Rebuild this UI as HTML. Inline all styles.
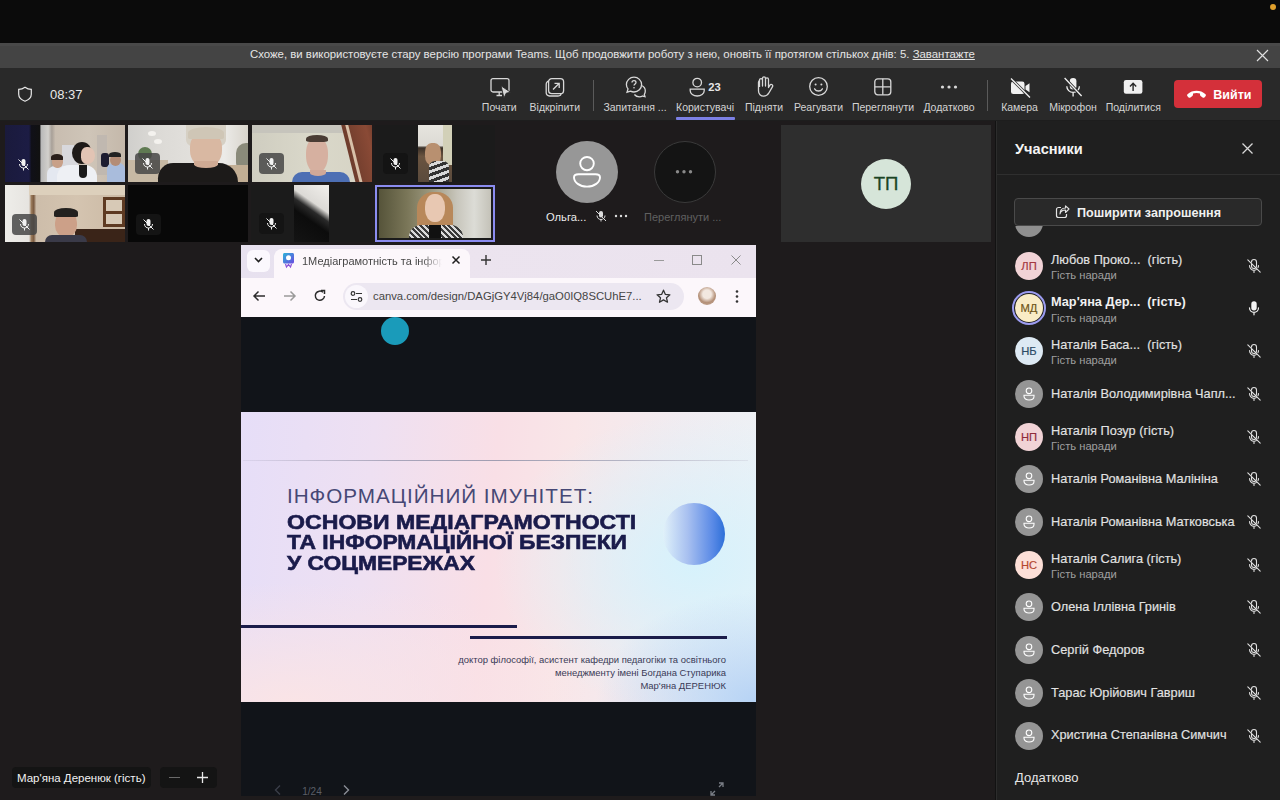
<!DOCTYPE html>
<html><head><meta charset="utf-8">
<style>
*{margin:0;padding:0;box-sizing:border-box}
html,body{width:1280px;height:800px;overflow:hidden;background:#1e1b1c;font-family:"Liberation Sans",sans-serif;color:#fff}
.a{position:absolute}
.t{position:absolute;white-space:nowrap;line-height:1}
svg{overflow:visible}
</style></head><body>

<div class="a" style="left:0px;top:0px;width:1280px;height:43px;background:#0b0b0b;"></div>
<div class="a" style="left:1269.5px;top:4px;width:6px;height:6px;border-radius:50%;background:#e0a02c"></div>
<div class="a" style="left:0px;top:43px;width:1280px;height:25px;background:#444444;"></div>
<div class="a" style="left:0px;top:43px;width:1280px;height:3px;background:#494949;"></div>
<div class="t" style="left:250.00px;top:48.85px;font-size:11.4px;color:#e6e6e6;font-weight:400;">Схоже, ви використовуєте стару версію програми Teams. Щоб продовжити роботу з нею, оновіть її протягом стількох днів: 5. <span style="text-decoration:underline;text-underline-offset:1px">Завантажте</span></div>
<svg class="a" style="left:1256px;top:49px;" width="13" height="13" viewBox="0 0 13 13"><path d="M1 1L12 12M12 1L1 12" stroke="#e0e0e0" stroke-width="1.15"/></svg>
<div class="a" style="left:0px;top:68px;width:1280px;height:52px;background:#292929;"></div>
<div class="a" style="left:0px;top:120px;width:1280px;height:1px;background:#1d1d1d;"></div>
<svg class="a" style="left:17px;top:86px;" width="16" height="16" viewBox="0 0 16 16"><path d="M8 1.2C10 2.6 12 3.3 14.3 3.4V8.2C14.3 11.6 11.9 13.7 8 15.2C4.1 13.7 1.7 11.6 1.7 8.2V3.4C4 3.3 6 2.6 8 1.2Z" fill="none" stroke="#e8e8e8" stroke-width="1.2"/></svg>
<div class="t" style="left:50.00px;top:87.60px;font-size:13px;color:#e8e8e8;font-weight:400;">08:37</div>
<svg class="a" style="left:489px;top:77px;" width="22" height="22" viewBox="0 0 22 22"><rect x="2" y="1.6" width="18" height="13.4" rx="2" fill="none" stroke="#d8d8d8" stroke-width="1.3"/><path d="M7.5 18.5H13M10.2 15V18.5" stroke="#d8d8d8" stroke-width="1.3"/><path d="M12 8.8L21.5 15.2L17.2 16.2L15 21Z" fill="#d8d8d8" stroke="#292929" stroke-width="0.9"/></svg>
<div class="t" style="left:199.30px;width:600px;text-align:center;top:101.51px;font-size:10.5px;color:#d4d4d4;font-weight:400;">Почати</div>
<svg class="a" style="left:544px;top:77px;" width="22" height="22" viewBox="0 0 22 22"><rect x="2.2" y="4" width="15" height="15" rx="3.2" fill="none" stroke="#d8d8d8" stroke-width="1.3"/><rect x="4.6" y="1.6" width="15" height="15" rx="3.2" fill="#292929" stroke="#d8d8d8" stroke-width="1.3"/><path d="M9 12.5L15 6.5M10.5 6.3H15.2V11" fill="none" stroke="#d8d8d8" stroke-width="1.3"/></svg>
<div class="t" style="left:254.80px;width:600px;text-align:center;top:101.51px;font-size:10.5px;color:#d4d4d4;font-weight:400;">Відкріпити</div>
<div class="a" style="left:593px;top:80px;width:1px;height:31px;background:#5a5a5a;"></div>
<svg class="a" style="left:624px;top:75px;" width="24" height="24" viewBox="0 0 24 24"><path d="M17.5 10.5C20 11.5 21.3 13.5 21.3 16C21.3 17.3 20.9 18.5 20.3 19.4L21 21.6L18.6 21C17.7 21.5 16.6 21.8 15.4 21.8C13.3 21.8 11.5 20.9 10.4 19.5" fill="none" stroke="#d8d8d8" stroke-width="1.3"/><path d="M10 2.2C14.2 2.2 17.6 5.5 17.6 9.6C17.6 13.7 14.2 17 10 17C8.7 17 7.5 16.7 6.5 16.2L3 17.2L4 13.9C3 12.7 2.4 11.2 2.4 9.6C2.4 5.5 5.8 2.2 10 2.2Z" fill="#292929" stroke="#d8d8d8" stroke-width="1.3"/><path d="M8 7.6C8 6.4 8.9 5.6 10 5.6C11.1 5.6 12 6.4 12 7.4C12 8.8 10 9 10 10.6" fill="none" stroke="#d8d8d8" stroke-width="1.3"/><circle cx="10" cy="12.8" r="0.8" fill="#d8d8d8"/></svg>
<div class="t" style="left:335.00px;width:600px;text-align:center;top:101.51px;font-size:10.5px;color:#d4d4d4;font-weight:400;">Запитання ...</div>
<svg class="a" style="left:688px;top:76px;" width="20" height="22" viewBox="0 0 20 22"><circle cx="9.2" cy="6.6" r="4.3" fill="none" stroke="#d8d8d8" stroke-width="1.3"/><path d="M2.2 13.2H16.2V14.8C16.2 17.8 13 20 9.2 20C5.4 20 2.2 17.8 2.2 14.8Z" fill="none" stroke="#d8d8d8" stroke-width="1.3"/></svg>
<div class="t" style="left:708.20px;top:81.92px;font-size:11.2px;color:#e6e6e6;font-weight:700;">23</div>
<div class="t" style="left:405.00px;width:600px;text-align:center;top:101.51px;font-size:10.5px;color:#d4d4d4;font-weight:400;">Користувачі</div>
<div class="a" style="left:676px;top:117px;width:59px;height:2.5px;background:#7c80e4;border-radius:1px"></div>
<svg class="a" style="left:753px;top:75px;" width="22" height="24" viewBox="0 0 22 24"><path d="M6.5 12V5.2C6.5 4.2 7.2 3.6 8 3.6C8.8 3.6 9.5 4.2 9.5 5.2V11V3.4C9.5 2.4 10.2 1.8 11 1.8C11.8 1.8 12.5 2.4 12.5 3.4V11V4.4C12.5 3.4 13.2 2.8 14 2.8C14.8 2.8 15.5 3.4 15.5 4.4V12.5L16.8 10.4C17.4 9.4 18.4 9.2 19.1 9.7C19.8 10.2 19.9 11 19.4 11.9L16 17.8C14.8 19.9 13 21.2 10.6 21.2C7.8 21.2 5.5 19 5.5 16V7.2C5.5 6.2 6.2 5.6 7 5.6" fill="none" stroke="#d8d8d8" stroke-width="1.3" stroke-linejoin="round"/></svg>
<div class="t" style="left:464.00px;width:600px;text-align:center;top:101.51px;font-size:10.5px;color:#d4d4d4;font-weight:400;">Підняти</div>
<svg class="a" style="left:808px;top:76px;" width="22" height="22" viewBox="0 0 22 22"><circle cx="10.5" cy="10.5" r="8.8" fill="none" stroke="#d8d8d8" stroke-width="1.3"/><circle cx="7.6" cy="8.4" r="1" fill="#d8d8d8"/><circle cx="13.4" cy="8.4" r="1" fill="#d8d8d8"/><path d="M6.6 12.8C7.5 14.3 8.9 15 10.5 15C12.1 15 13.5 14.3 14.4 12.8" fill="none" stroke="#d8d8d8" stroke-width="1.3" stroke-linecap="round"/></svg>
<div class="t" style="left:518.50px;width:600px;text-align:center;top:101.51px;font-size:10.5px;color:#d4d4d4;font-weight:400;">Реагувати</div>
<svg class="a" style="left:873px;top:77px;" width="20" height="20" viewBox="0 0 20 20"><rect x="1.8" y="1.8" width="16" height="16" rx="3" fill="none" stroke="#d8d8d8" stroke-width="1.3"/><path d="M9.8 1.8V17.8M1.8 9.8H17.8" stroke="#d8d8d8" stroke-width="1.3"/></svg>
<div class="t" style="left:583.00px;width:600px;text-align:center;top:101.51px;font-size:10.5px;color:#d4d4d4;font-weight:400;">Переглянути</div>
<svg class="a" style="left:939px;top:84px;" width="20" height="6" viewBox="0 0 20 6"><circle cx="3.5" cy="3" r="1.6" fill="#d8d8d8"/><circle cx="10" cy="3" r="1.6" fill="#d8d8d8"/><circle cx="16.5" cy="3" r="1.6" fill="#d8d8d8"/></svg>
<div class="t" style="left:649.00px;width:600px;text-align:center;top:101.51px;font-size:10.5px;color:#d4d4d4;font-weight:400;">Додатково</div>
<div class="a" style="left:987px;top:80px;width:1px;height:31px;background:#5a5a5a;"></div>
<svg class="a" style="left:1009px;top:77px;" width="24" height="22" viewBox="0 0 24 22"><rect x="2" y="4.5" width="13.5" height="12.5" rx="2.3" fill="#f0f0f0"/><path d="M16.5 9L20.5 6.3V15.2L16.5 12.5Z" fill="#f0f0f0"/><path d="M2 1.5L21 20.5" stroke="#292929" stroke-width="3"/><path d="M2 1.5L21 20.5" stroke="#f0f0f0" stroke-width="1.3"/></svg>
<div class="t" style="left:719.50px;width:600px;text-align:center;top:101.51px;font-size:10.5px;color:#d4d4d4;font-weight:400;">Камера</div>
<svg class="a" style="left:1063px;top:76px;" width="20" height="22" viewBox="0 0 20 22"><rect x="6.8" y="2" width="6.6" height="11.6" rx="3.3" fill="#f0f0f0"/><path d="M3.8 10.2C3.8 13.8 6.6 16.3 10.1 16.3C13.6 16.3 16.4 13.8 16.4 10.2M10.1 16.3V20.5" fill="none" stroke="#f0f0f0" stroke-width="1.3"/><path d="M1.6 2L18.6 20" stroke="#292929" stroke-width="3"/><path d="M1.6 2L18.6 20" stroke="#f0f0f0" stroke-width="1.3"/></svg>
<div class="t" style="left:773.00px;width:600px;text-align:center;top:101.51px;font-size:10.5px;color:#d4d4d4;font-weight:400;">Мікрофон</div>
<svg class="a" style="left:1122px;top:78px;" width="22" height="18" viewBox="0 0 22 18"><rect x="1.8" y="2" width="18.6" height="13.8" rx="2.2" fill="#f0f0f0"/><path d="M11.1 13V5.4M8 8.4L11.1 5.2L14.2 8.4" fill="none" stroke="#292929" stroke-width="1.4"/></svg>
<div class="t" style="left:833.30px;width:600px;text-align:center;top:101.51px;font-size:10.5px;color:#d4d4d4;font-weight:400;">Поділитися</div>
<div class="a" style="left:1174px;top:80px;width:88px;height:28px;background:#d4303a;border-radius:4px"></div>
<svg class="a" style="left:1186px;top:88px;" width="22" height="12" viewBox="0 0 22 12"><path d="M1.5 6.2C6.5 1.6 14.5 1.6 19.5 6.2C20.1 6.8 20 7.7 19.5 8.3L18.4 9.4C17.9 9.9 17.1 9.9 16.6 9.5L14.6 8C14.1 7.6 14 7 14 6.5V5.6C11.8 4.7 9.2 4.7 7 5.6V6.5C7 7 6.9 7.6 6.4 8L4.4 9.5C3.9 9.9 3.1 9.9 2.6 9.4L1.5 8.3C1 7.7 0.9 6.8 1.5 6.2Z" fill="#fff"/></svg>
<div class="t" style="left:1213.30px;top:89.32px;font-size:12.5px;color:#fff;font-weight:700;">Вийти</div>
<div class="a" style="left:5px;top:125px;width:120px;height:57px;background:#1b1b1b;overflow:hidden"><div class="a" style="left:0px;top:0px;width:120px;height:57px;background:linear-gradient(90deg,#1a1a3c 0%,#1c1c44 20%,#101018 22%,#111 29%,#b8b8b8 30%,#d2d0cc 36%,#a8a098 39%,#c8bdb0 42%,#cfc5b8 70%,#c4b8aa 100%);"></div><div class="a" style="left:57px;top:20px;width:16px;height:37px;background:#d8d8dc;"></div><div class="a" style="left:92px;top:10px;width:10px;height:40px;background:#c0b8b0;"></div><div class="a" style="left:42px;top:41px;width:30px;height:16px;background:#e4e8f0;border-radius:8px 8px 0 0"></div><div class="a" style="left:47px;top:30px;width:11px;height:13px;background:#c8a088;border-radius:45%"></div><div class="a" style="left:46px;top:29px;width:12px;height:6px;background:#2a1f1a;border-radius:50% 50% 10% 10%"></div><div class="a" style="left:52px;top:40px;width:40px;height:17px;background:#eef0f4;border-radius:12px 12px 0 0"></div><div class="a" style="left:67px;top:17px;width:20px;height:22px;background:#1e1a18;border-radius:50%"></div><div class="a" style="left:76px;top:22px;width:14px;height:17px;background:#e2c4b4;border-radius:40% 50% 50% 40%"></div><div class="a" style="left:74px;top:40px;width:8px;height:13px;background:#1a1a1a;border-radius:0 0 4px 4px"></div><div class="a" style="left:96px;top:28px;width:8px;height:14px;background:#1c1c30;border-radius:3px"></div><div class="a" style="left:102px;top:38px;width:18px;height:19px;background:#a9bcdc;border-radius:6px 6px 0 0"></div><div class="a" style="left:105px;top:29px;width:11px;height:12px;background:#b48c76;border-radius:50%"></div><div class="a" style="left:104px;top:27px;width:12px;height:5px;background:#222;border-radius:50% 50% 0 0"></div></div>
<div class="a" style="left:11px;top:154px;width:25px;height:21px;border-radius:4px;background:transparent"></div>
<svg class="a" style="left:17px;top:158px;" width="13" height="13" viewBox="0 0 13 13"><rect x="4.5" y="1" width="4" height="7" rx="2" fill="#f2f2f2"/><path d="M2.5 6C2.5 8.5 4.3 10 6.5 10C8.7 10 10.5 8.5 10.5 6M6.5 10V12.5" fill="none" stroke="#f2f2f2" stroke-width="1"/><path d="M1.5 1.5L11.5 11.5" stroke="#f2f2f2" stroke-width="1"/></svg>
<div class="a" style="left:128px;top:125px;width:120px;height:57px;background:#1b1b1b;overflow:hidden"><div class="a" style="left:0px;top:0px;width:120px;height:57px;background:linear-gradient(90deg,#d0cfcc 0%,#dcdad6 25%,#e2e0dc 55%,#ecebe8 80%,#d8d4cc 100%);"></div><div class="a" style="left:0px;top:35px;width:40px;height:22px;background:#c7b9a4;"></div><div class="a" style="left:10px;top:22px;width:14px;height:14px;background:#5f7a52;border-radius:50%"></div><div class="a" style="left:20px;top:6px;width:8px;height:5px;background:#f4f2ee;border-radius:50%"></div><div class="a" style="left:26px;top:14px;width:8px;height:5px;background:#f4f2ee;border-radius:50%"></div><div class="a" style="left:108px;top:18px;width:12px;height:30px;background:#8a8a7a;border-radius:10px 0 0 10px"></div><div class="a" style="left:100px;top:40px;width:20px;height:17px;background:#c2ae94;"></div><div class="a" style="left:58px;top:0px;width:40px;height:24px;background:#d6d0c4;border-radius:0 0 40% 40%"></div><div class="a" style="left:62px;top:6px;width:32px;height:36px;background:#d9b8a2;border-radius:45%"></div><div class="a" style="left:60px;top:2px;width:36px;height:12px;background:#cfc6b6;border-radius:50% 50% 10% 10%"></div><div class="a" style="left:30px;top:38px;width:80px;height:19px;background:#1c1a19;border-radius:24px 30px 0 0"></div><div class="a" style="left:66px;top:36px;width:24px;height:7px;background:#cfaa94;border-radius:0 0 50% 50%"></div></div>
<div class="a" style="left:135px;top:153px;width:25px;height:21px;border-radius:4px;background:rgba(70,70,70,0.85)"></div>
<svg class="a" style="left:141px;top:157px;" width="13" height="13" viewBox="0 0 13 13"><rect x="4.5" y="1" width="4" height="7" rx="2" fill="#f2f2f2"/><path d="M2.5 6C2.5 8.5 4.3 10 6.5 10C8.7 10 10.5 8.5 10.5 6M6.5 10V12.5" fill="none" stroke="#f2f2f2" stroke-width="1"/><path d="M1.5 1.5L11.5 11.5" stroke="#f2f2f2" stroke-width="1"/></svg>
<div class="a" style="left:252px;top:125px;width:120px;height:57px;background:#1b1b1b;overflow:hidden"><div class="a" style="left:0px;top:0px;width:120px;height:57px;background:linear-gradient(90deg,#cfcdc0 0%,#dad8ca 50%,#d6d3c4 100%);"></div><div class="a" style="left:0px;top:0px;width:120px;height:8px;background:#c6c4bc;"></div><div class="a" style="left:88px;top:-5px;width:40px;height:70px;background:linear-gradient(90deg,#6e3c2c,#8a4a36 60%,#5e3224);transform:skewX(14deg);transform-origin:0 0"></div><div class="a" style="left:92px;top:-5px;width:3px;height:70px;background:#d8c0a8;transform:skewX(14deg);transform-origin:0 0"></div><div class="a" style="left:54px;top:12px;width:22px;height:36px;background:#d6b0a0;border-radius:45% 45% 48% 48%"></div><div class="a" style="left:54px;top:10px;width:22px;height:7px;background:#4a3c34;border-radius:50% 50% 20% 20%"></div><div class="a" style="left:40px;top:47px;width:58px;height:10px;background:#4d6fb4;border-radius:14px 14px 0 0"></div><div class="a" style="left:58px;top:45px;width:16px;height:6px;background:#d0a898;border-radius:0 0 50% 50%"></div></div>
<div class="a" style="left:259px;top:153px;width:25px;height:21px;border-radius:4px;background:rgba(70,70,70,0.85)"></div>
<svg class="a" style="left:265px;top:157px;" width="13" height="13" viewBox="0 0 13 13"><rect x="4.5" y="1" width="4" height="7" rx="2" fill="#f2f2f2"/><path d="M2.5 6C2.5 8.5 4.3 10 6.5 10C8.7 10 10.5 8.5 10.5 6M6.5 10V12.5" fill="none" stroke="#f2f2f2" stroke-width="1"/><path d="M1.5 1.5L11.5 11.5" stroke="#f2f2f2" stroke-width="1"/></svg>
<div class="a" style="left:375px;top:125px;width:120px;height:57px;background:#1b1b1b;overflow:hidden"><div class="a" style="left:43px;top:0px;width:34px;height:57px;background:linear-gradient(180deg,#e6e4de 0%,#dcdad4 36%,#3a3028 40%,#6a5440 55%,#5a4a3c 100%);"></div><div class="a" style="left:68px;top:0px;width:9px;height:40px;background:#d2d0b8;"></div><div class="a" style="left:50px;top:18px;width:16px;height:22px;background:#b89070;border-radius:40%"></div><div class="a" style="left:54px;top:36px;width:20px;height:21px;background:repeating-linear-gradient(160deg,#333 0 3px,#d8d8d8 3px 6px);border-radius:6px 6px 0 0"></div></div>
<div class="a" style="left:383px;top:153px;width:25px;height:21px;border-radius:4px;background:#141414"></div>
<svg class="a" style="left:389px;top:157px;" width="13" height="13" viewBox="0 0 13 13"><rect x="4.5" y="1" width="4" height="7" rx="2" fill="#f2f2f2"/><path d="M2.5 6C2.5 8.5 4.3 10 6.5 10C8.7 10 10.5 8.5 10.5 6M6.5 10V12.5" fill="none" stroke="#f2f2f2" stroke-width="1"/><path d="M1.5 1.5L11.5 11.5" stroke="#f2f2f2" stroke-width="1"/></svg>
<div class="a" style="left:5px;top:185px;width:120px;height:57px;background:#1b1b1b;overflow:hidden"><div class="a" style="left:0px;top:0px;width:120px;height:57px;background:linear-gradient(90deg,#eeede9 0%,#e6e4e0 20%,#9a7a5a 22%,#7a5a40 24%,#cdbdaa 26%,#d4c4b0 60%,#cbb9a4 100%);"></div><div class="a" style="left:24px;top:0px;width:96px;height:10px;background:#ddd0bc;"></div><div class="a" style="left:98px;top:12px;width:22px;height:30px;background:#5e3a22;"></div><div class="a" style="left:101px;top:15px;width:16px;height:11px;background:#d7c9b6;"></div><div class="a" style="left:101px;top:29px;width:16px;height:10px;background:#d7c9b6;"></div><div class="a" style="left:70px;top:44px;width:50px;height:13px;background:#3a2418;"></div><div class="a" style="left:50px;top:26px;width:22px;height:26px;background:#cca088;border-radius:45%"></div><div class="a" style="left:49px;top:23px;width:24px;height:9px;background:#23211f;border-radius:50% 50% 10% 10%"></div><div class="a" style="left:40px;top:50px;width:42px;height:7px;background:#3a3a48;border-radius:8px 8px 0 0"></div></div>
<div class="a" style="left:12px;top:214px;width:25px;height:21px;border-radius:4px;background:rgba(70,70,70,0.85)"></div>
<svg class="a" style="left:18px;top:218px;" width="13" height="13" viewBox="0 0 13 13"><rect x="4.5" y="1" width="4" height="7" rx="2" fill="#f2f2f2"/><path d="M2.5 6C2.5 8.5 4.3 10 6.5 10C8.7 10 10.5 8.5 10.5 6M6.5 10V12.5" fill="none" stroke="#f2f2f2" stroke-width="1"/><path d="M1.5 1.5L11.5 11.5" stroke="#f2f2f2" stroke-width="1"/></svg>
<div class="a" style="left:128px;top:185px;width:120px;height:57px;background:#080808;overflow:hidden"></div>
<div class="a" style="left:136px;top:214px;width:25px;height:21px;border-radius:4px;background:#141414"></div>
<svg class="a" style="left:142px;top:218px;" width="13" height="13" viewBox="0 0 13 13"><rect x="4.5" y="1" width="4" height="7" rx="2" fill="#f2f2f2"/><path d="M2.5 6C2.5 8.5 4.3 10 6.5 10C8.7 10 10.5 8.5 10.5 6M6.5 10V12.5" fill="none" stroke="#f2f2f2" stroke-width="1"/><path d="M1.5 1.5L11.5 11.5" stroke="#f2f2f2" stroke-width="1"/></svg>
<div class="a" style="left:251px;top:185px;width:120px;height:57px;background:#1b1b1b;overflow:hidden"><div class="a" style="left:43px;top:0px;width:35px;height:57px;background:linear-gradient(215deg,#f2f0ec 0%,#dcdad6 35%,#2a2a2a 46%,#0c0c0c 60%,#141414 100%);"></div></div>
<div class="a" style="left:259px;top:213px;width:25px;height:21px;border-radius:4px;background:#141414"></div>
<svg class="a" style="left:265px;top:217px;" width="13" height="13" viewBox="0 0 13 13"><rect x="4.5" y="1" width="4" height="7" rx="2" fill="#f2f2f2"/><path d="M2.5 6C2.5 8.5 4.3 10 6.5 10C8.7 10 10.5 8.5 10.5 6M6.5 10V12.5" fill="none" stroke="#f2f2f2" stroke-width="1"/><path d="M1.5 1.5L11.5 11.5" stroke="#f2f2f2" stroke-width="1"/></svg>
<div class="a" style="left:375px;top:185px;width:120px;height:57px;border:2px solid #8b8cf0;background:#1b1b1b"></div>
<div class="a" style="left:379px;top:189px;width:112px;height:49px;overflow:hidden;background:linear-gradient(90deg,#56543a 0%,#7a7658 25%,#9a967c 45%,#c8c6bc 70%,#dcdcd6 85%,#c4c2b8 100%)"><div class="a" style="left:38px;top:3px;width:36px;height:46px;background:#b8885a;border-radius:16px 16px 4px 4px"></div><div class="a" style="left:46px;top:5px;width:20px;height:28px;background:#e8c8b2;border-radius:45%"></div><div class="a" style="left:30px;top:36px;width:54px;height:13px;background:repeating-linear-gradient(45deg,#3a3a3a 0 2px,#dadada 2px 4px);border-radius:12px 12px 0 0"></div><div class="a" style="left:50px;top:36px;width:12px;height:13px;background:#111;"></div></div>
<div class="a" style="left:556px;top:141px;width:62px;height:62px;border-radius:50%;background:#979797"></div>
<svg class="a" style="left:570px;top:154px;" width="34" height="36" viewBox="0 0 34 36"><ellipse cx="17" cy="9.6" rx="6.8" ry="6.6" fill="none" stroke="#fff" stroke-width="1.9"/><path d="M8.5 20.2H25.5C28.5 20.2 30 21.7 30 23.2C30 28.5 24.3 32.6 17 32.6C9.7 32.6 4 28.5 4 23.2C4 21.7 5.5 20.2 8.5 20.2Z" fill="none" stroke="#fff" stroke-width="1.9"/></svg>
<div class="t" style="left:546.00px;top:211.52px;font-size:11.2px;color:#ececec;font-weight:400;">Ольга...</div>
<svg class="a" style="left:595px;top:210px;" width="12" height="12" viewBox="0 0 12 12"><rect x="4" y="1" width="4" height="6.5" rx="2" fill="#ddd"/><path d="M2 5.5C2 8 3.8 9.5 6 9.5C8.2 9.5 10 8 10 5.5M6 9.5V11.5" fill="none" stroke="#ddd" stroke-width="1"/><path d="M1 1L11 11" stroke="#ddd" stroke-width="1"/></svg>
<svg class="a" style="left:614px;top:214px;" width="14" height="4" viewBox="0 0 14 4"><circle cx="2" cy="2" r="1.2" fill="#ddd"/><circle cx="7" cy="2" r="1.2" fill="#ddd"/><circle cx="12" cy="2" r="1.2" fill="#ddd"/></svg>
<div class="a" style="left:654px;top:141px;width:62px;height:62px;border-radius:50%;background:#141414;border:1px solid #3a3a3a"></div>
<svg class="a" style="left:675px;top:169px;" width="18" height="6" viewBox="0 0 18 6"><circle cx="2.5" cy="2.8" r="1.7" fill="#8a8a8a"/><circle cx="9" cy="2.8" r="1.7" fill="#8a8a8a"/><circle cx="15.5" cy="2.8" r="1.7" fill="#8a8a8a"/></svg>
<div class="t" style="left:644.00px;top:211.69px;font-size:11px;color:#606060;font-weight:400;">Переглянути ...</div>
<div class="a" style="left:781px;top:125px;width:210px;height:117px;background:#2e2e2e;"></div>
<div class="a" style="left:861px;top:159px;width:50px;height:50px;border-radius:50%;background:#d6e5d9"></div>
<div class="t" style="left:586.00px;width:600px;text-align:center;top:175.06px;font-size:18.6px;color:#1b4424;font-weight:400;-webkit-text-stroke:0.3px #1b4424">ТП</div>
<div class="a" style="left:241px;top:245px;width:515px;height:551px;background:#111419;"></div>
<div class="a" style="left:241px;top:245px;width:515px;height:33px;background:linear-gradient(90deg,#e7e1ef 0%,#ece4ef 40%,#ebe3ee 100%);"></div>
<div class="a" style="left:274px;top:249px;width:196px;height:30px;background:#fcf7fb;border-radius:8px 8px 0 0"></div>
<div class="a" style="left:247px;top:250px;width:23px;height:22px;background:#fbf8fd;border-radius:6px"></div>
<svg class="a" style="left:253px;top:256px;" width="11" height="8" viewBox="0 0 11 8"><path d="M2 2L5.5 5.5L9 2" fill="none" stroke="#1f1f1f" stroke-width="1.6"/></svg>
<svg class="a" style="left:281px;top:252px;" width="15" height="16" viewBox="0 0 15 16"><path d="M2 2.5C2 1.7 2.7 1 3.5 1H11.5C12.3 1 13 1.7 13 2.5V10C13 10.8 12.3 11.5 11.5 11.5H3.5C2.7 11.5 2 10.8 2 10Z" fill="url(#fg)"/><defs><linearGradient id="fg" x1="0" y1="0" x2="1" y2="1"><stop offset="0" stop-color="#2cb4d8"/><stop offset="1" stop-color="#6a48e0"/></linearGradient></defs><path d="M4.5 12L5.5 15L7.5 12.5L9.5 15L10.5 12" fill="none" stroke="#8a50d8" stroke-width="1.2"/><circle cx="7.5" cy="5.8" r="2.5" fill="#fff"/></svg>
<div class="t" style="left:302.00px;top:255.69px;font-size:11px;color:#474747;font-weight:400;width:140px;overflow:hidden;-webkit-mask-image:linear-gradient(90deg,#000 85%,transparent)">1Медіаграмотність та інформа</div>
<svg class="a" style="left:451px;top:255px;" width="10" height="10" viewBox="0 0 10 10"><path d="M1.5 1.5L8.5 8.5M8.5 1.5L1.5 8.5" stroke="#1f1f1f" stroke-width="1.5"/></svg>
<svg class="a" style="left:480px;top:254px;" width="12" height="12" viewBox="0 0 12 12"><path d="M6 1V11M1 6H11" stroke="#333" stroke-width="1.4"/></svg>
<div class="a" style="left:654px;top:260px;width:10px;height:1px;background:#9a9a9a;"></div>
<div class="a" style="left:692px;top:255px;width:10px;height:10px;border:1px solid #8a8a8a"></div>
<svg class="a" style="left:731px;top:255px;" width="10" height="10" viewBox="0 0 10 10"><path d="M0.5 0.5L9.5 9.5M9.5 0.5L0.5 9.5" stroke="#8a8a8a" stroke-width="1"/></svg>
<div class="a" style="left:241px;top:278px;width:515px;height:39px;background:#fcf7fb;"></div>
<svg class="a" style="left:252px;top:290px;" width="14" height="12" viewBox="0 0 14 12"><path d="M13 6H2M6.5 1.5L2 6L6.5 10.5" fill="none" stroke="#2c2c2c" stroke-width="1.5"/></svg>
<svg class="a" style="left:283px;top:290px;" width="14" height="12" viewBox="0 0 14 12"><path d="M1 6H12M7.5 1.5L12 6L7.5 10.5" fill="none" stroke="#9a9a9a" stroke-width="1.5"/></svg>
<svg class="a" style="left:313px;top:289px;" width="14" height="14" viewBox="0 0 14 14"><path d="M11.5 7A4.6 4.6 0 1 1 10 3.3" fill="none" stroke="#2c2c2c" stroke-width="1.5"/><path d="M8 1.5H11.5V5" fill="none" stroke="#2c2c2c" stroke-width="1.5"/></svg>
<div class="a" style="left:343px;top:283px;width:341px;height:27px;border-radius:14px;background:#ece7f1"></div>
<div class="a" style="left:345px;top:285px;width:23px;height:23px;border-radius:50%;background:#faf7fc"></div>
<svg class="a" style="left:350px;top:290px;" width="13" height="13" viewBox="0 0 13 13"><circle cx="3" cy="3.5" r="1.8" fill="none" stroke="#333" stroke-width="1.2"/><path d="M6 3.5H12M1 9.5H7" stroke="#333" stroke-width="1.2"/><circle cx="10" cy="9.5" r="1.8" fill="none" stroke="#333" stroke-width="1.2"/></svg>
<div class="t" style="left:373.00px;top:291.43px;font-size:11.3px;color:#454545;font-weight:400;">canva.com/design/DAGjGY4Vj84/gaO0IQ8SCUhE7...</div>
<svg class="a" style="left:656px;top:289px;" width="15" height="15" viewBox="0 0 15 15"><path d="M7.5 1.2L9.4 5.4L13.9 5.8L10.5 8.8L11.5 13.2L7.5 10.9L3.5 13.2L4.5 8.8L1.1 5.8L5.6 5.4Z" fill="none" stroke="#333" stroke-width="1.3" stroke-linejoin="round"/></svg>
<div class="a" style="left:698px;top:287px;width:18px;height:18px;border-radius:50%;background:radial-gradient(circle at 50% 40%,#f2e8e0 0 30%,#b49078 60%,#c8b0a0 100%)"></div>
<svg class="a" style="left:734px;top:289px;" width="6" height="15" viewBox="0 0 6 15"><circle cx="3" cy="2.5" r="1.3" fill="#333"/><circle cx="3" cy="7.5" r="1.3" fill="#333"/><circle cx="3" cy="12.5" r="1.3" fill="#333"/></svg>
<div class="a" style="left:381px;top:317px;width:28px;height:28px;border-radius:50%;background:#1a9bba"></div>
<div class="a" style="left:241px;top:412px;width:515px;height:290px;overflow:hidden;background:radial-gradient(ellipse 160px 110px at 100% 100%,#b6d3f5 0%,rgba(190,215,245,0) 100%),radial-gradient(ellipse 200px 150px at 88% 52%,rgba(214,242,252,1) 0%,rgba(220,244,252,0) 100%),radial-gradient(ellipse 300px 120px at 10% 100%,rgba(250,228,230,1) 0%,rgba(248,226,232,0) 100%),linear-gradient(95deg,#e6def8 0%,#eee0f2 25%,#f9dfe6 48%,#f9e6e8 62%,#f1ecf1 82%,#edf2f6 100%)"></div>
<div class="a" style="left:243px;top:460px;width:505px;height:1px;background:linear-gradient(90deg,rgba(170,165,190,0.2),#a9a5bb 30%,#a29eb2 50%,#b4b4c4 75%,rgba(190,190,205,0.3));"></div>
<div class="t" style="left:287.00px;top:486.08px;font-size:20.7px;color:#464875;font-weight:400;letter-spacing:0.95px">ІНФОРМАЦІЙНИЙ ІМУНІТЕТ:</div>
<div class="t" style="left:287.00px;top:512.81px;font-size:19.6px;color:#1a1b4b;font-weight:700;transform:scaleX(1.18);transform-origin:0 0;-webkit-text-stroke:0.6px #1a1b4b">ОСНОВИ МЕДІАГРАМОТНОСТІ</div>
<div class="t" style="left:287.00px;top:533.11px;font-size:19.6px;color:#1a1b4b;font-weight:700;transform:scaleX(1.165);transform-origin:0 0;-webkit-text-stroke:0.6px #1a1b4b">ТА ІНФОРМАЦІЙНОЇ БЕЗПЕКИ</div>
<div class="t" style="left:287.00px;top:554.21px;font-size:19.6px;color:#1a1b4b;font-weight:700;transform:scaleX(1.165);transform-origin:0 0;-webkit-text-stroke:0.6px #1a1b4b">У СОЦМЕРЕЖАХ</div>
<div class="a" style="left:663px;top:503px;width:62px;height:62px;border-radius:50%;background:linear-gradient(90deg,rgba(240,244,252,0.2) 0%,#a8c0f0 40%,#5a8ae6 80%,#2d6fd8 100%)"></div>
<div class="a" style="left:241px;top:625px;width:276px;height:3px;background:#1b1c4a;"></div>
<div class="a" style="left:470px;top:636px;width:257px;height:3px;background:#1b1c4a;"></div>
<div class="t" style="left:126.00px;width:600px;text-align:right;top:654.50px;font-size:9.45px;color:#3a3a56;font-weight:400;">доктор філософії, асистент кафедри педагогіки та освітнього</div>
<div class="t" style="left:126.00px;width:600px;text-align:right;top:667.50px;font-size:9.45px;color:#3a3a56;font-weight:400;">менеджменту імені Богдана Ступарика</div>
<div class="t" style="left:126.00px;width:600px;text-align:right;top:680.50px;font-size:9.45px;color:#3a3a56;font-weight:400;">Мар'яна ДЕРЕНЮК</div>
<svg class="a" style="left:273px;top:784px;" width="10" height="12" viewBox="0 0 10 12"><path d="M7 1.5L2.5 6L7 10.5" fill="none" stroke="#3a3e48" stroke-width="1.4"/></svg>
<div class="t" style="left:12.00px;width:600px;text-align:center;top:786.53px;font-size:10px;color:#5a5e66;font-weight:400;">1/24</div>
<svg class="a" style="left:341px;top:784px;" width="10" height="12" viewBox="0 0 10 12"><path d="M3 1.5L7.5 6L3 10.5" fill="none" stroke="#8a8e96" stroke-width="1.4"/></svg>
<svg class="a" style="left:709px;top:781px;" width="16" height="16" viewBox="0 0 16 16"><path d="M10 2H14V6M14 2L10 6M6 14H2V10M2 14L6 10" fill="none" stroke="#7a7e86" stroke-width="1.3"/></svg>
<div class="a" style="left:12px;top:767px;width:139px;height:21px;border-radius:4px;background:#141414"></div>
<div class="t" style="left:17.00px;top:772.97px;font-size:11.5px;color:#f2f2f2;font-weight:400;">Мар'яна Деренюк (гість)</div>
<div class="a" style="left:160px;top:767px;width:57px;height:21px;border-radius:4px;background:#141414"></div>
<div class="a" style="left:169px;top:777px;width:11px;height:1px;background:#6a6a6a;"></div>
<svg class="a" style="left:196px;top:771px;" width="13" height="13" viewBox="0 0 13 13"><path d="M6.5 1V12M1 6.5H12" stroke="#e8e8e8" stroke-width="1.3"/></svg>
<div class="a" style="left:996px;top:121px;width:284px;height:679px;background:#1f1f1f;"></div>
<div class="a" style="left:995px;top:121px;width:1px;height:679px;background:#121212;"></div>
<div class="a" style="left:996px;top:121px;width:1px;height:679px;background:#2c2c2c;"></div>
<div class="t" style="left:1015.00px;top:141.64px;font-size:14.6px;color:#f4f4f4;font-weight:700;">Учасники</div>
<svg class="a" style="left:1241px;top:142px;" width="13" height="13" viewBox="0 0 13 13"><path d="M1.5 1.5L11.5 11.5M11.5 1.5L1.5 11.5" stroke="#d8d8d8" stroke-width="1.3"/></svg>
<div class="a" style="left:997px;top:174px;width:283px;height:1px;background:#2f2f2f;"></div>
<div class="a" style="left:1015px;top:209px;width:28px;height:28px;border-radius:50%;background:#8f8f8f"></div>
<div class="a" style="left:997px;top:175px;width:283px;height:51px;background:#1f1f1f;"></div>
<div class="a" style="left:1014px;top:198px;width:248px;height:28px;border-radius:4px;background:#292929;border:1px solid #4a4a4a"></div>
<svg class="a" style="left:1055px;top:205px;" width="15" height="14" viewBox="0 0 15 14"><path d="M6 2.5H3.5C2.4 2.5 1.5 3.4 1.5 4.5V10.5C1.5 11.6 2.4 12.5 3.5 12.5H9.5C10.6 12.5 11.5 11.6 11.5 10.5V9" fill="none" stroke="#e4e4e4" stroke-width="1.2"/><path d="M5 9C5.5 6.5 7.5 5 10.5 5V7.5L14 4L10.5 0.8V3C7 3 5 5.5 5 9Z" fill="none" stroke="#e4e4e4" stroke-width="1.1" stroke-linejoin="round"/></svg>
<div class="t" style="left:1077.00px;top:207.13px;font-size:12.6px;color:#f0f0f0;font-weight:700;">Поширити запрошення</div>
<div class="a" style="left:1015px;top:252px;width:28px;height:28px;border-radius:50%;background:#f1d3d6"></div>
<div class="t" style="left:729.00px;width:600px;text-align:center;top:260.72px;font-size:11.2px;color:#a4373f;font-weight:400;-webkit-text-stroke:0.2px #a4373f">ЛП</div>
<div class="t" style="left:1051.00px;top:253.61px;font-size:12.75px;color:#e2e2e2;font-weight:400;-webkit-text-stroke:0.15px #e2e2e2">Любов Проко... &nbsp;(гість)</div>
<div class="t" style="left:1051.00px;top:269.82px;font-size:11.2px;color:#a0a0a0;font-weight:400;">Гість наради</div>
<svg class="a" style="left:1246px;top:258px;" width="16" height="16" viewBox="0 0 16 16"><path d="M5.5 4C5.5 2.6 6.6 1.5 8 1.5C9.4 1.5 10.5 2.6 10.5 4V8C10.5 8.4 10.4 8.8 10.2 9.1M5.5 5.5V8C5.5 9.4 6.6 10.5 8 10.5C8.4 10.5 8.8 10.4 9.1 10.2M3.5 7.5C3.5 10 5.5 12.2 8 12.2C9 12.2 9.9 11.9 10.7 11.4M12.5 7.5C12.5 8.3 12.3 9 12 9.6M8 12.2V14.5M1.8 1.8L14.2 14.2" fill="none" stroke="#e0e0e0" stroke-width="1.1" stroke-linecap="round"/></svg>
<div class="a" style="left:1012px;top:291px;width:34px;height:34px;border-radius:50%;border:2px solid #9c9cf0"></div>
<div class="a" style="left:1015px;top:294px;width:28px;height:28px;border-radius:50%;background:#f9ecc6"></div>
<div class="t" style="left:729.00px;width:600px;text-align:center;top:302.72px;font-size:11.2px;color:#6e5417;font-weight:400;-webkit-text-stroke:0.2px #6e5417">МД</div>
<div class="t" style="left:1051.00px;top:296.41px;font-size:12.75px;color:#f0f0f0;font-weight:700;">Мар'яна Дер... &nbsp;(гість)</div>
<div class="t" style="left:1051.00px;top:312.62px;font-size:11.2px;color:#a0a0a0;font-weight:400;">Гість наради</div>
<svg class="a" style="left:1246px;top:300px;" width="16" height="16" viewBox="0 0 16 16"><rect x="5.3" y="1.2" width="5.4" height="9.2" rx="2.7" fill="#f4f4f4"/><path d="M3.5 7.8C3.5 10.3 5.5 12.3 8 12.3C10.5 12.3 12.5 10.3 12.5 7.8M8 12.3V14.8" fill="none" stroke="#f4f4f4" stroke-width="1.2" stroke-linecap="round"/></svg>
<div class="a" style="left:1015px;top:337px;width:28px;height:28px;border-radius:50%;background:#dde9f3"></div>
<div class="t" style="left:729.00px;width:600px;text-align:center;top:345.72px;font-size:11.2px;color:#2c4b66;font-weight:400;-webkit-text-stroke:0.2px #2c4b66">НБ</div>
<div class="t" style="left:1051.00px;top:339.11px;font-size:12.75px;color:#e2e2e2;font-weight:400;-webkit-text-stroke:0.15px #e2e2e2">Наталія Баса... &nbsp;(гість)</div>
<div class="t" style="left:1051.00px;top:355.32px;font-size:11.2px;color:#a0a0a0;font-weight:400;">Гість наради</div>
<svg class="a" style="left:1246px;top:343px;" width="16" height="16" viewBox="0 0 16 16"><path d="M5.5 4C5.5 2.6 6.6 1.5 8 1.5C9.4 1.5 10.5 2.6 10.5 4V8C10.5 8.4 10.4 8.8 10.2 9.1M5.5 5.5V8C5.5 9.4 6.6 10.5 8 10.5C8.4 10.5 8.8 10.4 9.1 10.2M3.5 7.5C3.5 10 5.5 12.2 8 12.2C9 12.2 9.9 11.9 10.7 11.4M12.5 7.5C12.5 8.3 12.3 9 12 9.6M8 12.2V14.5M1.8 1.8L14.2 14.2" fill="none" stroke="#e0e0e0" stroke-width="1.1" stroke-linecap="round"/></svg>
<div class="a" style="left:1015px;top:380px;width:28px;height:28px;border-radius:50%;background:#959595"></div>
<svg class="a" style="left:1022px;top:387px;" width="14" height="14" viewBox="0 0 14 14"><circle cx="7" cy="3.8" r="2.8" fill="none" stroke="#fff" stroke-width="1.1"/><path d="M2 8.2H12V9.2C12 11.5 9.8 13 7 13C4.2 13 2 11.5 2 9.2Z" fill="none" stroke="#fff" stroke-width="1.1"/></svg>
<div class="t" style="left:1051.00px;top:387.71px;font-size:12.75px;color:#e2e2e2;font-weight:400;-webkit-text-stroke:0.15px #e2e2e2">Наталія Володимирівна Чапл...</div>
<svg class="a" style="left:1246px;top:386px;" width="16" height="16" viewBox="0 0 16 16"><path d="M5.5 4C5.5 2.6 6.6 1.5 8 1.5C9.4 1.5 10.5 2.6 10.5 4V8C10.5 8.4 10.4 8.8 10.2 9.1M5.5 5.5V8C5.5 9.4 6.6 10.5 8 10.5C8.4 10.5 8.8 10.4 9.1 10.2M3.5 7.5C3.5 10 5.5 12.2 8 12.2C9 12.2 9.9 11.9 10.7 11.4M12.5 7.5C12.5 8.3 12.3 9 12 9.6M8 12.2V14.5M1.8 1.8L14.2 14.2" fill="none" stroke="#e0e0e0" stroke-width="1.1" stroke-linecap="round"/></svg>
<div class="a" style="left:1015px;top:423px;width:28px;height:28px;border-radius:50%;background:#f1d3d6"></div>
<div class="t" style="left:729.00px;width:600px;text-align:center;top:431.72px;font-size:11.2px;color:#8f2b3a;font-weight:400;-webkit-text-stroke:0.2px #8f2b3a">НП</div>
<div class="t" style="left:1051.00px;top:424.51px;font-size:12.75px;color:#e2e2e2;font-weight:400;-webkit-text-stroke:0.15px #e2e2e2">Наталія Позур (гість)</div>
<div class="t" style="left:1051.00px;top:440.72px;font-size:11.2px;color:#a0a0a0;font-weight:400;">Гість наради</div>
<svg class="a" style="left:1246px;top:429px;" width="16" height="16" viewBox="0 0 16 16"><path d="M5.5 4C5.5 2.6 6.6 1.5 8 1.5C9.4 1.5 10.5 2.6 10.5 4V8C10.5 8.4 10.4 8.8 10.2 9.1M5.5 5.5V8C5.5 9.4 6.6 10.5 8 10.5C8.4 10.5 8.8 10.4 9.1 10.2M3.5 7.5C3.5 10 5.5 12.2 8 12.2C9 12.2 9.9 11.9 10.7 11.4M12.5 7.5C12.5 8.3 12.3 9 12 9.6M8 12.2V14.5M1.8 1.8L14.2 14.2" fill="none" stroke="#e0e0e0" stroke-width="1.1" stroke-linecap="round"/></svg>
<div class="a" style="left:1015px;top:465px;width:28px;height:28px;border-radius:50%;background:#959595"></div>
<svg class="a" style="left:1022px;top:472px;" width="14" height="14" viewBox="0 0 14 14"><circle cx="7" cy="3.8" r="2.8" fill="none" stroke="#fff" stroke-width="1.1"/><path d="M2 8.2H12V9.2C12 11.5 9.8 13 7 13C4.2 13 2 11.5 2 9.2Z" fill="none" stroke="#fff" stroke-width="1.1"/></svg>
<div class="t" style="left:1051.00px;top:473.11px;font-size:12.75px;color:#e2e2e2;font-weight:400;-webkit-text-stroke:0.15px #e2e2e2">Наталія Романівна Малініна</div>
<svg class="a" style="left:1246px;top:471px;" width="16" height="16" viewBox="0 0 16 16"><path d="M5.5 4C5.5 2.6 6.6 1.5 8 1.5C9.4 1.5 10.5 2.6 10.5 4V8C10.5 8.4 10.4 8.8 10.2 9.1M5.5 5.5V8C5.5 9.4 6.6 10.5 8 10.5C8.4 10.5 8.8 10.4 9.1 10.2M3.5 7.5C3.5 10 5.5 12.2 8 12.2C9 12.2 9.9 11.9 10.7 11.4M12.5 7.5C12.5 8.3 12.3 9 12 9.6M8 12.2V14.5M1.8 1.8L14.2 14.2" fill="none" stroke="#e0e0e0" stroke-width="1.1" stroke-linecap="round"/></svg>
<div class="a" style="left:1015px;top:508px;width:28px;height:28px;border-radius:50%;background:#959595"></div>
<svg class="a" style="left:1022px;top:515px;" width="14" height="14" viewBox="0 0 14 14"><circle cx="7" cy="3.8" r="2.8" fill="none" stroke="#fff" stroke-width="1.1"/><path d="M2 8.2H12V9.2C12 11.5 9.8 13 7 13C4.2 13 2 11.5 2 9.2Z" fill="none" stroke="#fff" stroke-width="1.1"/></svg>
<div class="t" style="left:1051.00px;top:515.81px;font-size:12.75px;color:#e2e2e2;font-weight:400;-webkit-text-stroke:0.15px #e2e2e2">Наталія Романівна Матковська</div>
<svg class="a" style="left:1246px;top:514px;" width="16" height="16" viewBox="0 0 16 16"><path d="M5.5 4C5.5 2.6 6.6 1.5 8 1.5C9.4 1.5 10.5 2.6 10.5 4V8C10.5 8.4 10.4 8.8 10.2 9.1M5.5 5.5V8C5.5 9.4 6.6 10.5 8 10.5C8.4 10.5 8.8 10.4 9.1 10.2M3.5 7.5C3.5 10 5.5 12.2 8 12.2C9 12.2 9.9 11.9 10.7 11.4M12.5 7.5C12.5 8.3 12.3 9 12 9.6M8 12.2V14.5M1.8 1.8L14.2 14.2" fill="none" stroke="#e0e0e0" stroke-width="1.1" stroke-linecap="round"/></svg>
<div class="a" style="left:1015px;top:551px;width:28px;height:28px;border-radius:50%;background:#fcdfd7"></div>
<div class="t" style="left:729.00px;width:600px;text-align:center;top:559.72px;font-size:11.2px;color:#b5472f;font-weight:400;-webkit-text-stroke:0.2px #b5472f">НС</div>
<div class="t" style="left:1051.00px;top:552.61px;font-size:12.75px;color:#e2e2e2;font-weight:400;-webkit-text-stroke:0.15px #e2e2e2">Наталія Салига (гість)</div>
<div class="t" style="left:1051.00px;top:568.82px;font-size:11.2px;color:#a0a0a0;font-weight:400;">Гість наради</div>
<svg class="a" style="left:1246px;top:557px;" width="16" height="16" viewBox="0 0 16 16"><path d="M5.5 4C5.5 2.6 6.6 1.5 8 1.5C9.4 1.5 10.5 2.6 10.5 4V8C10.5 8.4 10.4 8.8 10.2 9.1M5.5 5.5V8C5.5 9.4 6.6 10.5 8 10.5C8.4 10.5 8.8 10.4 9.1 10.2M3.5 7.5C3.5 10 5.5 12.2 8 12.2C9 12.2 9.9 11.9 10.7 11.4M12.5 7.5C12.5 8.3 12.3 9 12 9.6M8 12.2V14.5M1.8 1.8L14.2 14.2" fill="none" stroke="#e0e0e0" stroke-width="1.1" stroke-linecap="round"/></svg>
<div class="a" style="left:1015px;top:593px;width:28px;height:28px;border-radius:50%;background:#959595"></div>
<svg class="a" style="left:1022px;top:600px;" width="14" height="14" viewBox="0 0 14 14"><circle cx="7" cy="3.8" r="2.8" fill="none" stroke="#fff" stroke-width="1.1"/><path d="M2 8.2H12V9.2C12 11.5 9.8 13 7 13C4.2 13 2 11.5 2 9.2Z" fill="none" stroke="#fff" stroke-width="1.1"/></svg>
<div class="t" style="left:1051.00px;top:601.21px;font-size:12.75px;color:#e2e2e2;font-weight:400;-webkit-text-stroke:0.15px #e2e2e2">Олена Іллівна Гринів</div>
<svg class="a" style="left:1246px;top:599px;" width="16" height="16" viewBox="0 0 16 16"><path d="M5.5 4C5.5 2.6 6.6 1.5 8 1.5C9.4 1.5 10.5 2.6 10.5 4V8C10.5 8.4 10.4 8.8 10.2 9.1M5.5 5.5V8C5.5 9.4 6.6 10.5 8 10.5C8.4 10.5 8.8 10.4 9.1 10.2M3.5 7.5C3.5 10 5.5 12.2 8 12.2C9 12.2 9.9 11.9 10.7 11.4M12.5 7.5C12.5 8.3 12.3 9 12 9.6M8 12.2V14.5M1.8 1.8L14.2 14.2" fill="none" stroke="#e0e0e0" stroke-width="1.1" stroke-linecap="round"/></svg>
<div class="a" style="left:1015px;top:636px;width:28px;height:28px;border-radius:50%;background:#959595"></div>
<svg class="a" style="left:1022px;top:643px;" width="14" height="14" viewBox="0 0 14 14"><circle cx="7" cy="3.8" r="2.8" fill="none" stroke="#fff" stroke-width="1.1"/><path d="M2 8.2H12V9.2C12 11.5 9.8 13 7 13C4.2 13 2 11.5 2 9.2Z" fill="none" stroke="#fff" stroke-width="1.1"/></svg>
<div class="t" style="left:1051.00px;top:643.91px;font-size:12.75px;color:#e2e2e2;font-weight:400;-webkit-text-stroke:0.15px #e2e2e2">Сергій Федоров</div>
<svg class="a" style="left:1246px;top:642px;" width="16" height="16" viewBox="0 0 16 16"><path d="M5.5 4C5.5 2.6 6.6 1.5 8 1.5C9.4 1.5 10.5 2.6 10.5 4V8C10.5 8.4 10.4 8.8 10.2 9.1M5.5 5.5V8C5.5 9.4 6.6 10.5 8 10.5C8.4 10.5 8.8 10.4 9.1 10.2M3.5 7.5C3.5 10 5.5 12.2 8 12.2C9 12.2 9.9 11.9 10.7 11.4M12.5 7.5C12.5 8.3 12.3 9 12 9.6M8 12.2V14.5M1.8 1.8L14.2 14.2" fill="none" stroke="#e0e0e0" stroke-width="1.1" stroke-linecap="round"/></svg>
<div class="a" style="left:1015px;top:679px;width:28px;height:28px;border-radius:50%;background:#959595"></div>
<svg class="a" style="left:1022px;top:686px;" width="14" height="14" viewBox="0 0 14 14"><circle cx="7" cy="3.8" r="2.8" fill="none" stroke="#fff" stroke-width="1.1"/><path d="M2 8.2H12V9.2C12 11.5 9.8 13 7 13C4.2 13 2 11.5 2 9.2Z" fill="none" stroke="#fff" stroke-width="1.1"/></svg>
<div class="t" style="left:1051.00px;top:686.61px;font-size:12.75px;color:#e2e2e2;font-weight:400;-webkit-text-stroke:0.15px #e2e2e2">Тарас Юрійович Гавриш</div>
<svg class="a" style="left:1246px;top:685px;" width="16" height="16" viewBox="0 0 16 16"><path d="M5.5 4C5.5 2.6 6.6 1.5 8 1.5C9.4 1.5 10.5 2.6 10.5 4V8C10.5 8.4 10.4 8.8 10.2 9.1M5.5 5.5V8C5.5 9.4 6.6 10.5 8 10.5C8.4 10.5 8.8 10.4 9.1 10.2M3.5 7.5C3.5 10 5.5 12.2 8 12.2C9 12.2 9.9 11.9 10.7 11.4M12.5 7.5C12.5 8.3 12.3 9 12 9.6M8 12.2V14.5M1.8 1.8L14.2 14.2" fill="none" stroke="#e0e0e0" stroke-width="1.1" stroke-linecap="round"/></svg>
<div class="a" style="left:1015px;top:722px;width:28px;height:28px;border-radius:50%;background:#959595"></div>
<svg class="a" style="left:1022px;top:729px;" width="14" height="14" viewBox="0 0 14 14"><circle cx="7" cy="3.8" r="2.8" fill="none" stroke="#fff" stroke-width="1.1"/><path d="M2 8.2H12V9.2C12 11.5 9.8 13 7 13C4.2 13 2 11.5 2 9.2Z" fill="none" stroke="#fff" stroke-width="1.1"/></svg>
<div class="t" style="left:1051.00px;top:729.31px;font-size:12.75px;color:#e2e2e2;font-weight:400;-webkit-text-stroke:0.15px #e2e2e2">Христина Степанівна Симчич</div>
<svg class="a" style="left:1246px;top:728px;" width="16" height="16" viewBox="0 0 16 16"><path d="M5.5 4C5.5 2.6 6.6 1.5 8 1.5C9.4 1.5 10.5 2.6 10.5 4V8C10.5 8.4 10.4 8.8 10.2 9.1M5.5 5.5V8C5.5 9.4 6.6 10.5 8 10.5C8.4 10.5 8.8 10.4 9.1 10.2M3.5 7.5C3.5 10 5.5 12.2 8 12.2C9 12.2 9.9 11.9 10.7 11.4M12.5 7.5C12.5 8.3 12.3 9 12 9.6M8 12.2V14.5M1.8 1.8L14.2 14.2" fill="none" stroke="#e0e0e0" stroke-width="1.1" stroke-linecap="round"/></svg>
<div class="t" style="left:1015.00px;top:770.50px;font-size:13px;color:#e6e6e6;font-weight:400;">Додатково</div>
</body></html>
